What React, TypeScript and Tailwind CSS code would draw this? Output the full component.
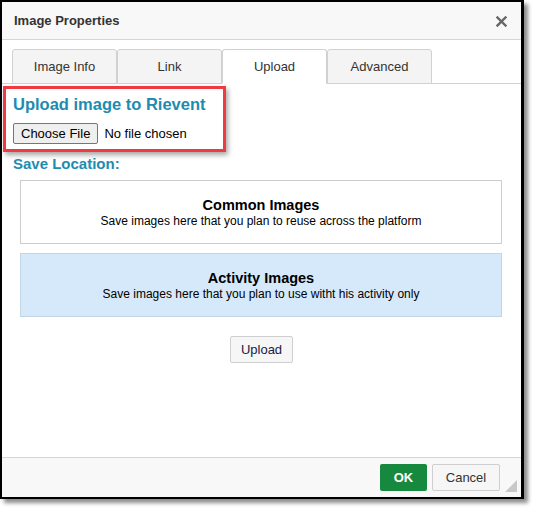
import { useState } from "react";

type TabKey = "info" | "link" | "upload" | "advanced";

const TABS: { k: TabKey; label: string }[] = [
  { k: "info", label: "Image Info" },
  { k: "link", label: "Link" },
  { k: "upload", label: "Upload" },
  { k: "advanced", label: "Advanced" },
];

export default function App() {
  const [tab, setTab] = useState<TabKey>("upload");
  const [location, setLocation] = useState<"common" | "activity">("activity");

  return (
    <div className="min-h-screen bg-white font-['Liberation_Sans',Arial,sans-serif]">
      <div className="flex h-[499px] w-[524px] flex-col border-2 border-r-[3px] border-black bg-white shadow-[4px_4px_4px_rgba(0,0,0,0.45)]">
        {/* title bar */}
        <div className="flex h-[38px] items-center justify-between border-b border-[#d6d6d6] bg-[#f8f8f8] pl-[12px] pr-[14px]">
          <span className="text-[13px] font-bold text-[#333]">Image Properties</span>
          <svg width="11" height="11" viewBox="0 0 11 11" className="mt-[1px]">
            <path d="M1.5 1.5 9.5 9.5M9.5 1.5 1.5 9.5" stroke="#666" strokeWidth="2.4" strokeLinecap="square" />
          </svg>
        </div>

        {/* tabs */}
        <div className="flex border-b border-[#d1d1d1] px-[10px] pt-[9px]">
          {TABS.map(t => (
            <TabBtn key={t.k} k={t.k} cur={tab} set={setTab} label={t.label} />
          ))}
        </div>

        {/* upload tab body */}
        <div className="flex flex-1 flex-col">
          <div className="ml-[1px] mt-[2px] w-[223px] border-[3px] border-[#ef3a42] pb-[5px] pl-[7px] pt-[6px] shadow-[2px_3px_5px_rgba(0,0,0,0.35)]">
            <h2 className="text-[16.5px] font-bold leading-[19px] text-[#1d8cb0]">Upload image to Rievent</h2>
            <div className="mt-[9px] flex items-center">
              <button className="h-[21px] rounded-[2px] border border-[#767676] bg-[#efefef] px-[7px] text-[13px] leading-none text-black">
                Choose File
              </button>
              <span className="ml-[6px] text-[13px] text-black">No file chosen</span>
            </div>
          </div>

          <div className="ml-[11px] mt-[3px] text-[15px] font-bold leading-[17px] text-[#1d8cb0]">Save Location:</div>

          <div className="mt-[8px] flex flex-col gap-[9px] pl-[18px] pr-[19px]">
            <LocationBox
              title="Common Images"
              desc="Save images here that you plan to reuse across the platform"
              active={location === "common"}
              onClick={() => setLocation("common")}
            />
            <LocationBox
              title="Activity Images"
              desc="Save images here that you plan to use witht his activity only"
              active={location === "activity"}
              onClick={() => setLocation("activity")}
            />
          </div>

          <div className="mt-[19px] flex justify-center">
            <button className="h-[27px] w-[63px] rounded-[2px] border border-[#cfcfcf] bg-[#f6f6f6] text-[13px] text-[#1a1a40]">
              Upload
            </button>
          </div>
        </div>

        {/* footer */}
        <div className="flex h-[40px] items-center justify-end border-t border-[#d6d6d6] bg-[#f8f8f8] pr-[4px]">
          <button className="h-[27px] w-[47px] rounded-[2px] bg-[#17893f] text-[13px] font-bold text-white">OK</button>
          <button className="ml-[5px] h-[27px] w-[68px] rounded-[2px] border border-[#cfcfcf] bg-[#f6f6f6] text-[13px] text-[#333]">
            Cancel
          </button>
          <svg width="12" height="12" viewBox="0 0 12 12" className="mb-[5px] ml-[5px] self-end">
            <path d="M12 0V12H0Z" fill="#c8c8c8" />
          </svg>
        </div>
      </div>
    </div>
  );
}

function TabBtn({ k, cur, set, label }: { k: TabKey; cur: TabKey; set: (k: TabKey) => void; label: string }) {
  const active = cur === k;
  return (
    <button
      onClick={() => set(k)}
      className={`-mb-px h-[35px] w-[105px] rounded-t-[3px] border border-[#d1d1d1] text-[13px] text-[#333] ${
        active ? "border-b-white bg-white" : "bg-[#f4f4f4]"
      }`}
    >
      {label}
    </button>
  );
}

function LocationBox({ title, desc, active, onClick }: { title: string; desc: string; active: boolean; onClick: () => void }) {
  return (
    <div
      onClick={onClick}
      className={`flex h-[64px] cursor-pointer flex-col items-center justify-center border ${
        active ? "border-[#c3d6e6] bg-[#d6e9fb]" : "border-[#cccccc] bg-white"
      }`}
    >
      <div className="text-[14.5px] font-bold leading-[17px] text-black">{title}</div>
      <div className="text-[12px] leading-[14px] text-black">{desc}</div>
    </div>
  );
}
